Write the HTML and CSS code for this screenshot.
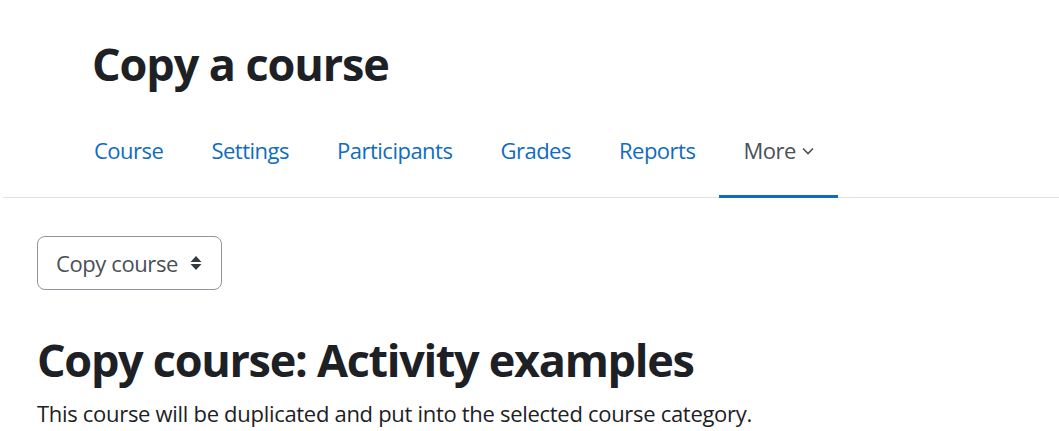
FILE: index.html
```html
<!DOCTYPE html>
<html lang="en">
<head>
  <meta charset="UTF-8">
  <meta name="viewport" content="width=device-width, initial-scale=1.0">
  <title>Copy a course</title>
  <link rel="stylesheet" href="styles.css">
</head>
<body>
  <header class="page-header">
    <h1>Copy a course</h1>
  </header>

  <div class="secondary-nav">
    <nav class="more-nav">
      <a href="#course">Course</a>
      <a href="#settings">Settings</a>
      <a href="#participants">Participants</a>
      <a href="#grades">Grades</a>
      <a href="#reports">Reports</a>
      <a href="#more" class="active">More
        <svg class="chevron" width="12" height="8" viewBox="0 0 12 8"><path d="M1 1.5 L6 6.5 L11 1.5" fill="none" stroke="#495057" stroke-width="1.6"/></svg>
      </a>
    </nav>
  </div>

  <main class="content">
    <div class="select-menu">
      <span>Copy course</span>
      <svg class="updown" width="12" height="16" viewBox="0 0 12 16"><path d="M6 1 L11.5 7 L0.5 7 Z M6 15 L11.5 9 L0.5 9 Z" fill="#343a40"/></svg>
    </div>

    <h2>Copy course: Activity examples</h2>
    <p>This course will be duplicated and put into the selected course category.</p>
  </main>
</body>
</html>
```

FILE: styles.css
```css
body {
  font-family: "Open Sans", "Noto Sans", sans-serif;
  margin: 0;
  padding: 0;
  background-color: #fff;
  color: #1d2125;
}

.page-header {
  padding: 37px 0 0 92px;
}

.page-header h1 {
  margin: 0;
  font-size: 45px;
  line-height: 54px;
  font-weight: 700;
  letter-spacing: -1.1px;
}

.secondary-nav {
  margin: 25px 0 0 3px;
  border-bottom: 1px solid #dee2e6;
}

.more-nav {
  display: flex;
  margin-left: 67px;
}

.more-nav a {
  display: flex;
  align-items: center;
  gap: 6px;
  padding: 18px 24px 29px;
  color: #0f6cbf;
  text-decoration: none;
  font-size: 22px;
  line-height: 32px;
  letter-spacing: -0.5px;
  border-bottom: 3px solid transparent;
  margin-bottom: -1px;
}

.more-nav a.active {
  color: #495057;
  border-bottom-color: #0f6cbf;
}

.chevron {
  margin-top: 2px;
}

.content {
  padding: 38px 0 0 37px;
}

.select-menu {
  display: inline-flex;
  align-items: center;
  gap: 12px;
  height: 52px;
  padding: 0 19px 0 18px;
  border: 1px solid #8f959e;
  border-radius: 8px;
  color: #495057;
  font-size: 22px;
  letter-spacing: -0.4px;
}

.content h2 {
  margin: 43px 0 0;
  font-size: 45px;
  line-height: 54px;
  font-weight: 700;
  letter-spacing: -1.3px;
}

.content p {
  margin: 10px 0 0;
  font-size: 22px;
  line-height: 32px;
  letter-spacing: -0.3px;
}
```
